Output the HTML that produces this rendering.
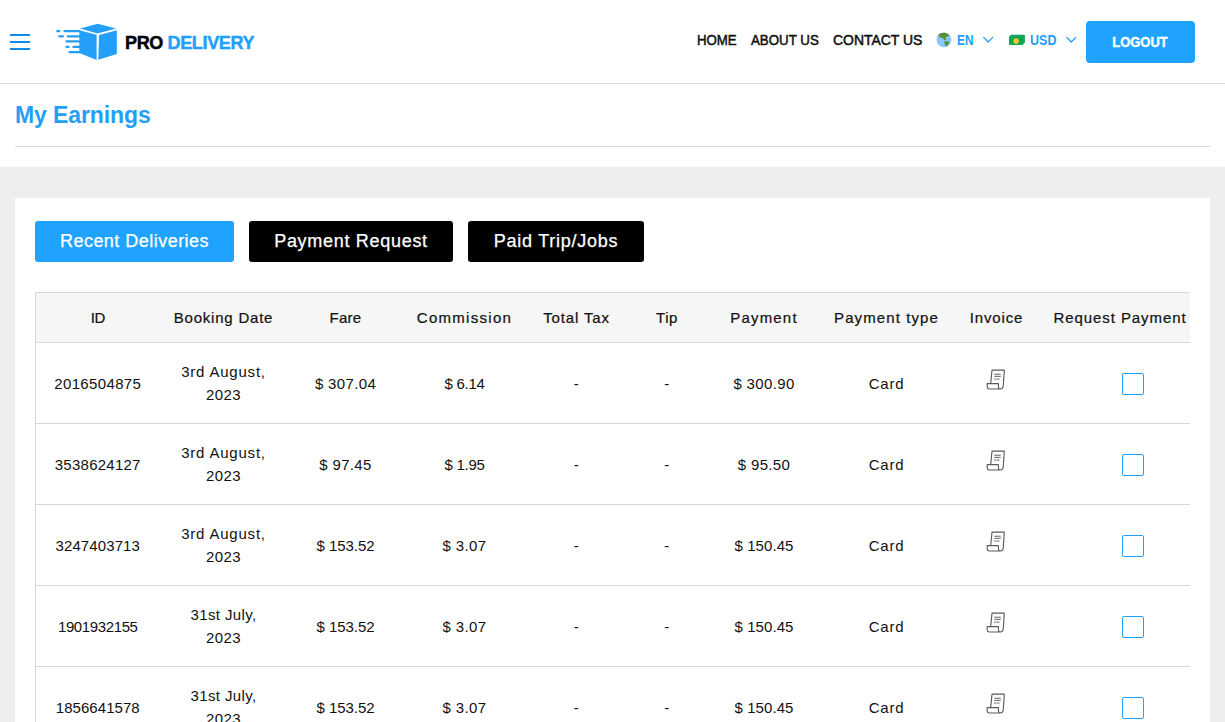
<!DOCTYPE html>
<html lang="en">
<head>
<meta charset="utf-8">
<title>My Earnings</title>
<style>
*{box-sizing:border-box;margin:0;padding:0}
html,body{width:1225px;height:722px;overflow:hidden;background:#eeeeee;font-family:"Liberation Sans",sans-serif;color:#111;}
#hdr{position:absolute;left:0;top:0;width:1225px;height:84px;background:#fff;border-bottom:1px solid #d9d9d9;}
#burger{position:absolute;left:10px;top:34px;width:20px;height:16px;}
#burger i{position:absolute;left:0;width:20px;height:2px;background:#0c8cee;}
#logo{position:absolute;left:50px;top:18px;width:80px;height:48px;}
#brand{position:absolute;left:125px;top:31px;font-size:18px;line-height:24px;font-weight:bold;letter-spacing:-.36px;color:#000;white-space:nowrap;-webkit-text-stroke:.45px currentColor;}
#brand span{color:#239ffa;font-weight:bold;}
.nav{position:absolute;top:29px;height:22px;line-height:22px;font-size:14px;color:#111;white-space:nowrap;-webkit-text-stroke:.5px currentColor;transform-origin:0 50%;}
.nav.bl{color:#239ffa;font-size:14px;font-weight:bold;-webkit-text-stroke:0;transform-origin:0 50%;}
.ico{position:absolute;}
#logout{position:absolute;left:1086px;top:21px;width:109px;height:42px;border-radius:4px;background:#20a3fe;color:#fff;font-weight:bold;font-size:14px;text-align:center;line-height:43px;-webkit-text-stroke:.4px #fff;padding-right:1px;}
#logout span{display:inline-block;transform:scaleX(.925);}
#titlebar{position:absolute;left:0;top:84px;width:1225px;height:83px;background:#fff;}
#title{position:absolute;left:15px;top:12.5px;font-size:23px;line-height:36px;font-weight:bold;letter-spacing:-.1px;color:#239ffa;white-space:nowrap;}
#hr{position:absolute;left:15px;top:62px;width:1195px;height:1px;background:#d9d9d9;}
#card{position:absolute;left:15px;top:198px;width:1195px;height:540px;background:#fff;}
.tab{position:absolute;top:23px;height:41px;border-radius:3px;background:#000;color:#fff;font-size:18px;line-height:41px;text-align:center;white-space:nowrap;-webkit-text-stroke:.25px #fff;}
.tab.on{background:#20a3fe;}
#tw{position:absolute;left:20px;top:94px;width:1155px;height:460px;overflow:hidden;}
table{border-collapse:collapse;table-layout:fixed;width:1190px;font-size:15px;line-height:22.5px;border-left:1px solid #d8d8d8;}
th,td{text-align:center;vertical-align:middle;border-top:1px solid #d8d8d8;border-bottom:1px solid #d8d8d8;padding:1px 0 0 0;}
th{height:50px;background:#f6f6f6;font-weight:normal;white-space:nowrap;-webkit-text-stroke:.22px #111;}
td{height:81px;letter-spacing:.35px;padding-top:3px;}
td.t{letter-spacing:.8px;}
td.d{padding-top:1px;}
.cb{position:relative;left:13px;top:-1px;display:inline-block;width:22px;height:22px;border:1px solid #239ffa;border-radius:2px;vertical-align:middle;background:#fff;}
.inv{position:relative;top:-5.1px;left:-.7px;vertical-align:middle;}
</style>
</head>
<body>
<div id="hdr">
  <div id="burger"><i style="top:0"></i><i style="top:7px"></i><i style="top:14px"></i></div>
  <svg id="logo" viewBox="50 18 80 48">
    <g fill="#239ffa">
      <polygon points="80,28.6 97.6,23.8 116.1,28.6 97.6,33.5"/>
      <polygon points="79.3,30.2 96.6,34.7 96.6,60 79.3,53"/>
      <polygon points="99.1,35 116.8,30.2 116.8,54 98.3,59.8"/>
    </g>
    <g stroke="#239ffa" stroke-width="2.2" stroke-linecap="round" fill="none">
      <path d="M57.2 31.1H59.4M64.4 31.1H79.5"/>
      <path d="M59.2 36.3H63M67.7 36.3H79.5"/>
      <path d="M66.4 41.4H79.5"/>
      <path d="M66.4 46.9H68.6M73.4 46.9H79.5"/>
      <path d="M69.4 52.1H79.5"/>
    </g>
  </svg>
  <div id="brand">PRO <span>DELIVERY</span></div>
  <div class="nav" style="left:696.5px;transform:scaleX(.945)">HOME</div>
  <div class="nav" style="left:750.5px;transform:scaleX(.95)">ABOUT US</div>
  <div class="nav" style="left:833px;transform:scaleX(.995)">CONTACT US</div>
  <svg class="ico" style="left:936px;top:32px" width="16" height="16" viewBox="0 0 16 16">
    <circle cx="7.900" cy="7.800" r="7.400" fill="#88c9f9"/>
    <path d="M2.600 2.500C3.800 1.400 5.600 .8 7.400 .7c1.500-.1 3 .3 4 1 .9.600 1.600 1.200 2 1.900-.3.600-.9.900-1.500.800-.700-.1-1.300.1-1.700.600-.4.500-.700 1-.4 1.600.3.500.6 1 .1 1.400-.6.500-1.300.300-1.800-.3-.5-.700-1-1.500-1.800-1.700-.9-.2-1.900 0-2.600-.700C3 4.600 2.400 3.500 2.600 2.500z" fill="#5c913b"/>
    <path d="M8.500 9.500c.8-.500 1.900-.700 2.700-.400.900.300 1.700.800 1.900 1.500.200.800-.2 1.500-.8 2.100-.6.600-1.300 1.100-2 1.500-.5.300-.9-.1-1-.700-.1-.900-.4-1.500-.7-2.200-.3-.700-.6-1.400-.1-1.800z" fill="#5c913b"/>
  </svg>
  <div class="nav bl" style="left:956.7px;top:28.5px;transform:scaleX(.845)">EN</div>
  <svg class="ico" style="left:982px;top:35px" width="12" height="10" viewBox="0 0 12 10"><path d="M1.700 2.400L6.200 7L10.700 2.400" fill="none" stroke="#239ffa" stroke-width="1.3" stroke-linecap="round" stroke-linejoin="round"/></svg>
  <svg class="ico" style="left:1008px;top:34px" width="18" height="12" viewBox="0 0 18 12">
    <path d="M3 .8H16Q16.900 .8 16.900 1.700V8.600L14.500 10.950H1.900Q1 10.950 1 10V2.800Z" fill="#13a557"/>
    <circle cx="8.100" cy="6.950" r="2.800" fill="#fdc830"/>
  </svg>
  <div class="nav bl" style="left:1029.7px;top:28.5px;transform:scaleX(.895)">USD</div>
  <svg class="ico" style="left:1065px;top:35px" width="12" height="10" viewBox="0 0 12 10"><path d="M1.700 2.400L6.200 7L10.700 2.400" fill="none" stroke="#239ffa" stroke-width="1.3" stroke-linecap="round" stroke-linejoin="round"/></svg>
  <div id="logout"><span>LOGOUT</span></div>
</div>
<div id="titlebar"><div id="title">My Earnings</div><div id="hr"></div></div>
<div id="card">
  <div class="tab on" style="left:20px;width:199px;letter-spacing:.47px">Recent Deliveries</div>
  <div class="tab" style="left:234px;width:204px;letter-spacing:.7px">Payment Request</div>
  <div class="tab" style="left:453px;width:176px;letter-spacing:.75px">Paid Trip/Jobs</div>
  <div id="tw">
  <table>
    <colgroup><col style="width:124px"><col style="width:128px"><col style="width:116px"><col style="width:122px"><col style="width:102px"><col style="width:79px"><col style="width:115px"><col style="width:130px"><col style="width:90px"><col style="width:157px"><col></colgroup>
    <thead><tr>
      <th style="letter-spacing:-.6px">ID</th>
      <th style="letter-spacing:.79px">Booking Date</th>
      <th style="letter-spacing:.3px">Fare</th>
      <th style="letter-spacing:1.29px">Commission</th>
      <th style="letter-spacing:.85px">Total Tax</th>
      <th style="letter-spacing:.54px">Tip</th>
      <th style="letter-spacing:1.2px">Payment</th>
      <th style="letter-spacing:1.09px">Payment type</th>
      <th style="letter-spacing:.87px">Invoice</th>
      <th style="letter-spacing:.92px">Request Payment</th><th></th></tr></thead>
    <tbody>
      <tr><td>2016504875</td><td class="t d">3rd August,<br><span style="letter-spacing:.35px">2023</span></td><td>$ 307.04</td><td style="letter-spacing:-.25px">$ 6.14</td><td>-</td><td>-</td><td>$ 300.90</td><td class="t">Card</td><td><svg class="inv" width="19.4" height="21.3" viewBox="0 0 20 22" fill="none" stroke="#5a5a5a" stroke-width="1.15" stroke-linejoin="round" stroke-linecap="round"><path d="M4.800 15.100L6.200 1.200H18.900L17.800 17.600Q17.600 20.600 14.800 20.600H3.500Q1.200 20.600 1.200 18V15.100H12.800V18Q12.800 20.600 14.800 20.600"/><path d="M9 5.400H14.800M9 7.600H14.800M8.700 10.400H9.800M11.300 10.400H13.500" stroke-width="1"/></svg></td><td><span class="cb"></span></td><td></td></tr>
      <tr><td style="letter-spacing:.25px">3538624127</td><td class="t d">3rd August,<br><span style="letter-spacing:.35px">2023</span></td><td>$ 97.45</td><td style="letter-spacing:-.25px">$ 1.95</td><td>-</td><td>-</td><td>$ 95.50</td><td class="t">Card</td><td><svg class="inv" width="19.4" height="21.3" viewBox="0 0 20 22" fill="none" stroke="#5a5a5a" stroke-width="1.15" stroke-linejoin="round" stroke-linecap="round"><path d="M4.800 15.100L6.200 1.200H18.900L17.800 17.600Q17.600 20.600 14.800 20.600H3.500Q1.200 20.600 1.200 18V15.100H12.800V18Q12.800 20.600 14.800 20.600"/><path d="M9 5.400H14.800M9 7.600H14.800M8.700 10.400H9.800M11.300 10.400H13.500" stroke-width="1"/></svg></td><td><span class="cb"></span></td><td></td></tr>
      <tr><td style="letter-spacing:.1px">3247403713</td><td class="t d">3rd August,<br><span style="letter-spacing:.35px">2023</span></td><td style="letter-spacing:-.05px">$ 153.52</td><td>$ 3.07</td><td>-</td><td>-</td><td style="letter-spacing:.08px">$ 150.45</td><td class="t">Card</td><td><svg class="inv" width="19.4" height="21.3" viewBox="0 0 20 22" fill="none" stroke="#5a5a5a" stroke-width="1.15" stroke-linejoin="round" stroke-linecap="round"><path d="M4.800 15.100L6.200 1.200H18.900L17.800 17.600Q17.600 20.600 14.800 20.600H3.500Q1.200 20.600 1.200 18V15.100H12.800V18Q12.800 20.600 14.800 20.600"/><path d="M9 5.400H14.800M9 7.600H14.800M8.700 10.400H9.800M11.300 10.400H13.500" stroke-width="1"/></svg></td><td><span class="cb"></span></td><td></td></tr>
      <tr><td style="letter-spacing:-.38px">1901932155</td><td class="t d"><span style="letter-spacing:.37px">31st July,</span><br><span style="letter-spacing:.35px">2023</span></td><td style="letter-spacing:-.05px">$ 153.52</td><td>$ 3.07</td><td>-</td><td>-</td><td style="letter-spacing:.08px">$ 150.45</td><td class="t">Card</td><td><svg class="inv" width="19.4" height="21.3" viewBox="0 0 20 22" fill="none" stroke="#5a5a5a" stroke-width="1.15" stroke-linejoin="round" stroke-linecap="round"><path d="M4.800 15.100L6.200 1.200H18.900L17.800 17.600Q17.600 20.600 14.800 20.600H3.500Q1.200 20.600 1.200 18V15.100H12.800V18Q12.800 20.600 14.800 20.600"/><path d="M9 5.400H14.800M9 7.600H14.800M8.700 10.400H9.800M11.300 10.400H13.500" stroke-width="1"/></svg></td><td><span class="cb"></span></td><td></td></tr>
      <tr><td style="letter-spacing:.05px">1856641578</td><td class="t d"><span style="letter-spacing:.37px">31st July,</span><br><span style="letter-spacing:.35px">2023</span></td><td style="letter-spacing:-.05px">$ 153.52</td><td>$ 3.07</td><td>-</td><td>-</td><td style="letter-spacing:.08px">$ 150.45</td><td class="t">Card</td><td><svg class="inv" width="19.4" height="21.3" viewBox="0 0 20 22" fill="none" stroke="#5a5a5a" stroke-width="1.15" stroke-linejoin="round" stroke-linecap="round"><path d="M4.800 15.100L6.200 1.200H18.900L17.800 17.600Q17.600 20.600 14.800 20.600H3.500Q1.200 20.600 1.200 18V15.100H12.800V18Q12.800 20.600 14.800 20.600"/><path d="M9 5.400H14.800M9 7.600H14.800M8.700 10.400H9.800M11.300 10.400H13.500" stroke-width="1"/></svg></td><td><span class="cb"></span></td><td></td></tr>
    </tbody>
  </table>
  </div>
</div>
</body>
</html>
